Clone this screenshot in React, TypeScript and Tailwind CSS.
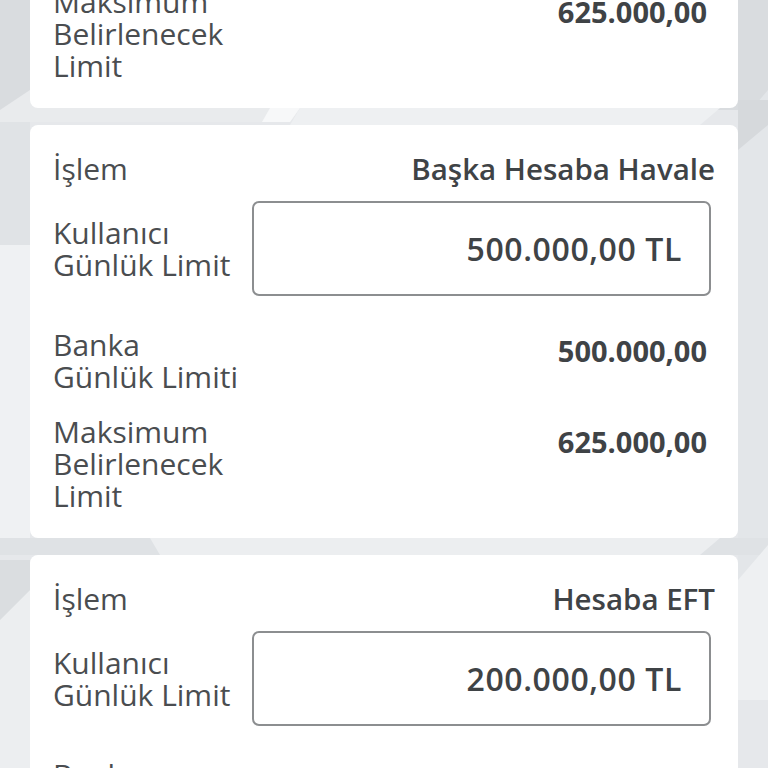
import React from "react";

type Limit = {
  islem: string;
  kullanici: string;
  banka: string;
  maksimum: string;
};

const limits: Limit[] = [
  {
    islem: "Kendi Hesaplarım Arası",
    kullanici: "500.000,00 TL",
    banka: "500.000,00",
    maksimum: "625.000,00",
  },
  {
    islem: "Başka Hesaba Havale",
    kullanici: "500.000,00 TL",
    banka: "500.000,00",
    maksimum: "625.000,00",
  },
  {
    islem: "Hesaba EFT",
    kullanici: "200.000,00 TL",
    banka: "200.000,00",
    maksimum: "250.000,00",
  },
];

const Background = () => (
  <svg
    className="absolute inset-0 h-full w-full"
    viewBox="0 0 768 768"
    preserveAspectRatio="none"
  >
    <rect width="768" height="768" fill="#e6e8eb" />
    <polygon points="0,0 768,0 768,110 0,110" fill="#d9dcdf" />
    <polygon points="0,110 60,70 330,70 290,122 0,122" fill="#e9ebed" />
    <polygon points="270,108 300,108 290,122 262,122" fill="#f7f8f9" />
    <polygon points="300,108 720,108 700,125 290,125" fill="#eef0f2" />
    <polygon points="0,245 30,245 30,540 0,540" fill="#eff1f3" />
    <polygon points="0,122 30,122 30,245 0,245" fill="#e0e3e6" />
    <polygon points="738,125 768,90 768,580 738,580" fill="#e3e6e9" />
    <polygon points="738,100 768,100 768,125 738,150" fill="#d6d9dc" />
    <polygon points="0,538 768,538 768,555 0,555" fill="#dfe2e5" />
    <polygon points="150,538 720,538 700,555 160,555" fill="#eceef0" />
    <polygon points="0,620 30,590 30,768 0,768" fill="#eceef0" />
    <polygon points="0,560 30,560 30,590 0,620" fill="#dadde0" />
    <polygon points="738,580 768,545 768,768 738,768" fill="#eef0f2" />
    <polygon points="738,700 768,700 768,768 738,768" fill="#e6e8eb" />
  </svg>
);

const LimitCard = ({ item }: { item: Limit }) => (
  <div className="rounded-[8px] bg-white pl-[23px] pr-[23px] pt-[28px] pb-[26px]">
    <div className="flex items-center justify-between leading-[32px]">
      <span className="text-[30px] text-[#4a4d50]">İşlem</span>
      <span className="text-[29.5px] font-semibold text-[#3f4346]">
        {item.islem}
      </span>
    </div>

    <div className="mt-[16px] flex items-center">
      <div className="w-[199px] shrink-0 text-[30px] leading-[32px] text-[#4a4d50]">
        Kullanıcı
        <br />
        Günlük Limit
      </div>
      <div className="mr-[4px] flex h-[95px] flex-1 items-center justify-end rounded-[7px] border-2 border-[#8c8e90] pr-[27px]">
        <span className="text-[32px] font-semibold tracking-[0.6px] text-[#3f4346]">
          {item.kullanici}
        </span>
      </div>
    </div>

    <div className="mt-[33px] flex items-start justify-between">
      <div className="text-[30px] leading-[32px] text-[#4a4d50]">
        Banka
        <br />
        Günlük Limiti
      </div>
      <span className="mt-[6px] pr-[8px] text-[29px] font-bold leading-[32px] text-[#3f4346]">
        {item.banka}
      </span>
    </div>

    <div className="mt-[23px] flex items-start justify-between">
      <div className="text-[30px] leading-[32px] text-[#4a4d50]">
        Maksimum
        <br />
        Belirlenecek
        <br />
        Limit
      </div>
      <span className="mt-[10px] pr-[8px] text-[29px] font-bold leading-[32px] text-[#3f4346]">
        {item.maksimum}
      </span>
    </div>
  </div>
);

export default function App() {
  return (
    <div
      className="relative h-[768px] w-[768px] overflow-hidden"
      style={{ fontFamily: '"Open Sans", "Noto Sans", sans-serif' }}
    >
      <Background />
      <div className="relative -mt-[305px] flex flex-col gap-[17px] px-[30px]">
        {limits.map((item) => (
          <LimitCard key={item.islem} item={item} />
        ))}
      </div>
    </div>
  );
}
